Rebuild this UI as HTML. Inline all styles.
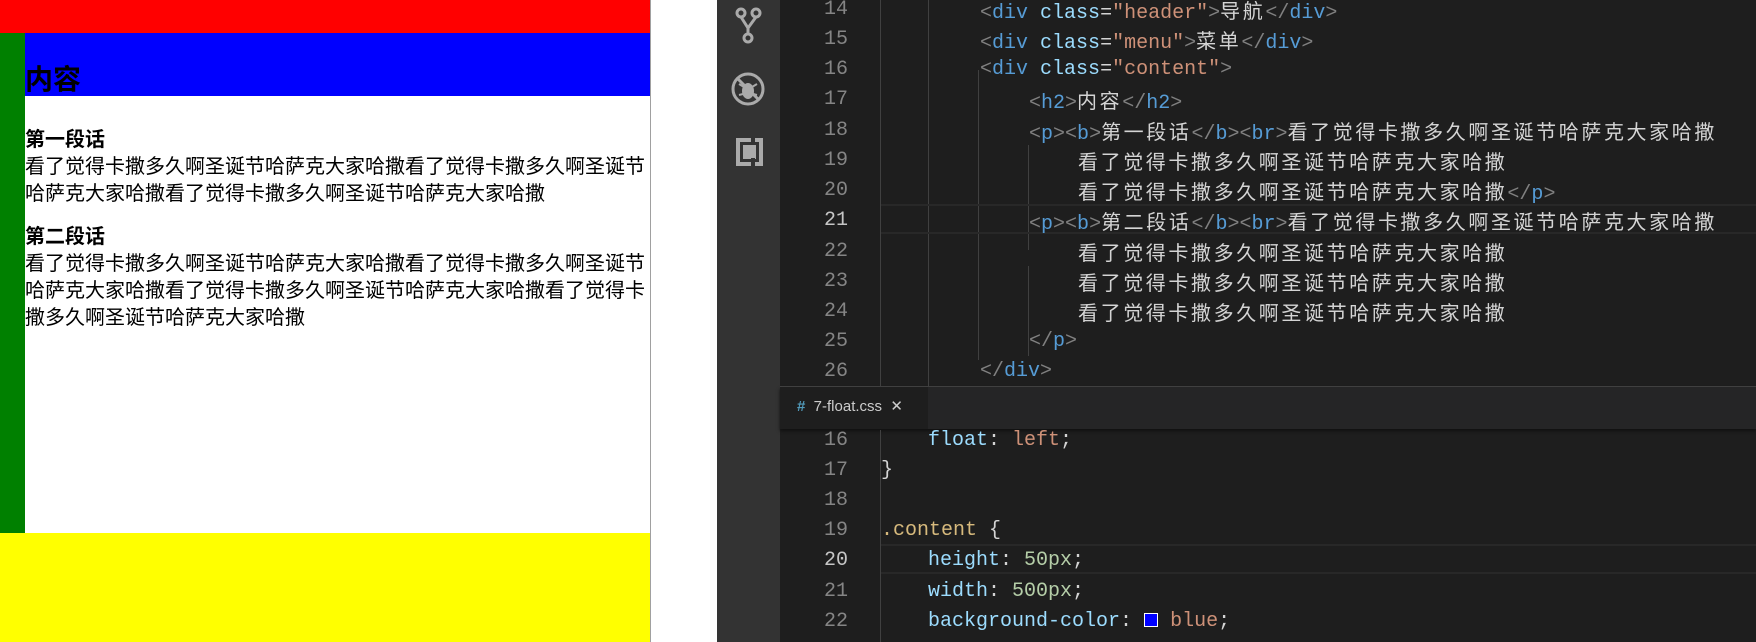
<!DOCTYPE html>
<html><head><meta charset="utf-8"><style>
*{margin:0;padding:0;box-sizing:border-box}
body{width:1756px;height:642px;overflow:hidden;background:#fff;position:relative;font-family:"Liberation Sans","Noto Sans CJK SC",sans-serif}
.a{position:absolute}
.p{position:absolute;left:25px;font-size:20px;line-height:27px;color:#000;white-space:nowrap;font-family:"Noto Sans CJK SC",sans-serif}
.code{position:absolute;font-family:"Liberation Mono","Noto Sans CJK SC",monospace;font-size:20px;color:#d4d4d4;white-space:pre;height:30px;line-height:30px}
.ln{position:absolute;width:60px;text-align:right;left:788px;font-family:"Liberation Mono",monospace;font-size:20px;color:#858585;line-height:30px}
.c{letter-spacing:2.6px;font-family:"Noto Sans CJK SC",sans-serif;font-size:20px}
.g{color:#808080}.t{color:#569cd6}.at{color:#9cdcfe}.s{color:#ce9178}.n{color:#b5cea8}
</style></head><body>
<div class="a" style="left:0;top:0;width:650px;height:33px;background:#f00"></div>
<div class="a" style="left:0;top:33px;width:25px;height:500px;background:#008000"></div>
<div class="a" style="left:25px;top:33px;width:625px;height:63px;background:#00f"></div>
<div class="a" style="left:0;top:533px;width:650px;height:109px;background:#ff0"></div>
<div class="a" style="left:650px;top:0;width:1px;height:642px;background:#a0a0a0"></div>
<div class="p" style="top:58px;font-size:28px;font-weight:bold;line-height:40px">内容</div>
<div class="p" style="top:124px;font-weight:bold">第一段话</div>
<div class="p" style="top:151px">看了觉得卡撒多久啊圣诞节哈萨克大家哈撒看了觉得卡撒多久啊圣诞节</div>
<div class="p" style="top:178px">哈萨克大家哈撒看了觉得卡撒多久啊圣诞节哈萨克大家哈撒</div>
<div class="p" style="top:221px;font-weight:bold">第二段话</div>
<div class="p" style="top:248px">看了觉得卡撒多久啊圣诞节哈萨克大家哈撒看了觉得卡撒多久啊圣诞节</div>
<div class="p" style="top:275px">哈萨克大家哈撒看了觉得卡撒多久啊圣诞节哈萨克大家哈撒看了觉得卡</div>
<div class="p" style="top:302px">撒多久啊圣诞节哈萨克大家哈撒</div>

<div class="a" style="left:717px;top:0;width:63px;height:642px;background:#333"></div>
<div class="a" style="left:780px;top:0;width:976px;height:642px;background:#1e1e1e"></div>
<svg class="a" style="left:717px;top:0" width="63" height="180">
<g fill="none" stroke="#aaa" stroke-width="3">
<circle cx="24" cy="13" r="4"/><circle cx="39" cy="13" r="4"/><circle cx="31" cy="38" r="4"/>
<path d="M24 17 L31 28 L39 17 M31 28 V34"/>
<circle cx="31" cy="89" r="15"/><path d="M20 78 L42 100"/>
</g>
<ellipse cx="31" cy="91" rx="6" ry="8" fill="#aaa"/>
<path d="M22 84 L27 87 M40 84 L35 87 M22 95 L26 94 M40 95 L36 94" stroke="#aaa" stroke-width="2"/>
<rect x="19" y="138" width="27" height="28" fill="#aaa"/>
<rect x="23" y="142" width="19" height="20" fill="#333"/>
<rect x="26" y="145" width="13" height="14" fill="#aaa"/>
<rect x="34" y="136" width="4" height="8" fill="#333"/><rect x="34" y="158" width="4" height="8" fill="#333"/>
</svg>

<div class="a" style="left:880px;top:0;width:1px;height:386px;background:#404040"></div>
<div class="a" style="left:928px;top:0;width:1px;height:386px;background:#404040"></div>
<div class="a" style="left:978px;top:70px;width:1px;height:290px;background:#404040"></div>
<div class="a" style="left:1028px;top:145px;width:1px;height:105px;background:#404040"></div>
<div class="a" style="left:1028px;top:266px;width:1px;height:90px;background:#404040"></div>
<div class="a" style="left:881px;top:204px;width:875px;height:30px;border-top:2px solid #282828;border-bottom:2px solid #282828"></div>

<div class="ln" style="top:-5px">14</div><div class="ln" style="top:25px">15</div><div class="ln" style="top:55px">16</div><div class="ln" style="top:85px">17</div><div class="ln" style="top:116px">18</div><div class="ln" style="top:146px">19</div><div class="ln" style="top:176px">20</div><div class="ln" style="top:206px;color:#c6c6c6">21</div><div class="ln" style="top:237px">22</div><div class="ln" style="top:267px">23</div><div class="ln" style="top:297px">24</div><div class="ln" style="top:327px">25</div><div class="ln" style="top:357px">26</div>

<div class="code" style="left:980px;top:-5px"><span class="g">&lt;</span><span class="t">div</span> <span class="at">class</span>=<span class="s">"header"</span><span class="g">&gt;</span><span class="c">导航</span><span class="g">&lt;/</span><span class="t">div</span><span class="g">&gt;</span></div>
<div class="code" style="left:980px;top:25px"><span class="g">&lt;</span><span class="t">div</span> <span class="at">class</span>=<span class="s">"menu"</span><span class="g">&gt;</span><span class="c">菜单</span><span class="g">&lt;/</span><span class="t">div</span><span class="g">&gt;</span></div>
<div class="code" style="left:980px;top:55px"><span class="g">&lt;</span><span class="t">div</span> <span class="at">class</span>=<span class="s">"content"</span><span class="g">&gt;</span></div>
<div class="code" style="left:1029px;top:85px"><span class="g">&lt;</span><span class="t">h2</span><span class="g">&gt;</span><span class="c">内容</span><span class="g">&lt;/</span><span class="t">h2</span><span class="g">&gt;</span></div>
<div class="code" style="left:1029px;top:116px"><span class="g">&lt;</span><span class="t">p</span><span class="g">&gt;&lt;</span><span class="t">b</span><span class="g">&gt;</span><span class="c">第一段话</span><span class="g">&lt;/</span><span class="t">b</span><span class="g">&gt;&lt;</span><span class="t">br</span><span class="g">&gt;</span><span class="c">看了觉得卡撒多久啊圣诞节哈萨克大家哈撒</span></div>
<div class="code" style="left:1078px;top:146px"><span class="c">看了觉得卡撒多久啊圣诞节哈萨克大家哈撒</span></div>
<div class="code" style="left:1078px;top:176px"><span class="c">看了觉得卡撒多久啊圣诞节哈萨克大家哈撒</span><span class="g">&lt;/</span><span class="t">p</span><span class="g">&gt;</span></div>
<div class="code" style="left:1029px;top:206px"><span class="g">&lt;</span><span class="t">p</span><span class="g">&gt;&lt;</span><span class="t">b</span><span class="g">&gt;</span><span class="c">第二段话</span><span class="g">&lt;/</span><span class="t">b</span><span class="g">&gt;&lt;</span><span class="t">br</span><span class="g">&gt;</span><span class="c">看了觉得卡撒多久啊圣诞节哈萨克大家哈撒</span></div>
<div class="code" style="left:1078px;top:237px"><span class="c">看了觉得卡撒多久啊圣诞节哈萨克大家哈撒</span></div>
<div class="code" style="left:1078px;top:267px"><span class="c">看了觉得卡撒多久啊圣诞节哈萨克大家哈撒</span></div>
<div class="code" style="left:1078px;top:297px"><span class="c">看了觉得卡撒多久啊圣诞节哈萨克大家哈撒</span></div>
<div class="code" style="left:1029px;top:327px"><span class="g">&lt;/</span><span class="t">p</span><span class="g">&gt;</span></div>
<div class="code" style="left:980px;top:357px"><span class="g">&lt;/</span><span class="t">div</span><span class="g">&gt;</span></div>

<div class="a" style="left:780px;top:386px;width:976px;height:1px;background:#444"></div>
<div class="a" style="left:780px;top:387px;width:976px;height:42px;background:#252526;box-shadow:0 2px 3px #111"></div>
<div class="a" style="left:780px;top:387px;width:148px;height:42px;background:#1e1e1e"></div>
<div class="a" style="left:797px;top:396px;font-family:'Liberation Sans',sans-serif;font-size:15px;color:#ccc;line-height:22px"><span style="color:#519aba;font-weight:bold">#</span>&nbsp; 7-float.css &nbsp;<span style="color:#ccc">✕</span></div>

<div class="a" style="left:880px;top:430px;width:1px;height:212px;background:#404040"></div>
<div class="a" style="left:881px;top:544px;width:875px;height:30px;border-top:2px solid #282828;border-bottom:2px solid #282828"></div>
<div class="ln" style="top:426px">16</div><div class="ln" style="top:456px">17</div><div class="ln" style="top:486px">18</div><div class="ln" style="top:516px">19</div><div class="ln" style="top:546px;color:#c6c6c6">20</div><div class="ln" style="top:577px">21</div><div class="ln" style="top:607px">22</div>
<div class="code" style="left:928px;top:426px"><span class="at">float</span>: <span class="s">left</span>;</div>
<div class="code" style="left:881px;top:456px">}</div>
<div class="code" style="left:881px;top:516px"><span style="color:#d7ba7d">.content</span> {</div>
<div class="code" style="left:928px;top:546px"><span class="at">height</span>: <span class="n">50px</span>;</div>
<div class="code" style="left:928px;top:577px"><span class="at">width</span>: <span class="n">500px</span>;</div>
<div class="code" style="left:928px;top:607px"><span class="at">background-color</span>: <span style="display:inline-block;width:14px;height:14px;background:#00f;border:1px solid #fff;vertical-align:-1px"></span> <span class="s">blue</span>;</div>
</body></html>
